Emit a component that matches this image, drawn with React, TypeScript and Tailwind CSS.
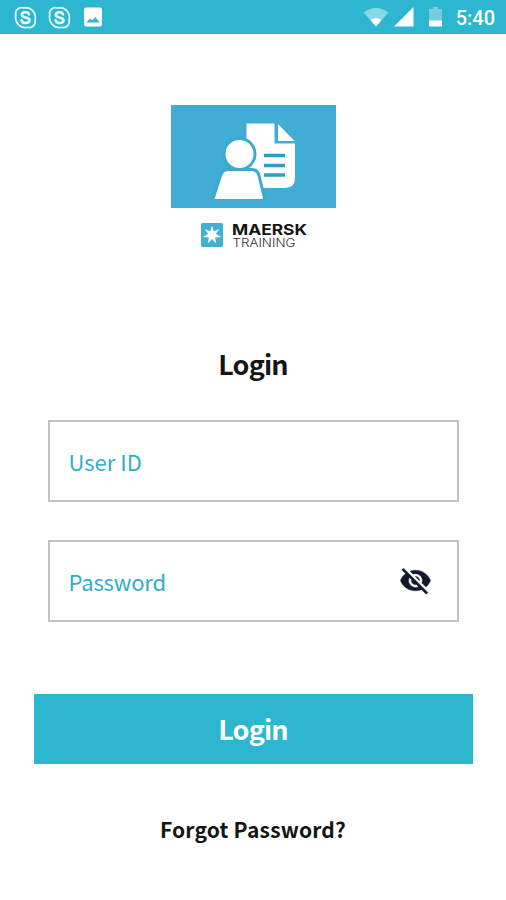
import React from "react";

function SkypeIcon() {
  return (
    <svg viewBox="2 2 20 20" className="h-[23px] w-[23px]" fill="none" stroke="#e6fbff" strokeLinecap="round" strokeLinejoin="round">
      <path strokeWidth="1.5" d="M12 3.400a8.700 8.700 0 0 1 8.300 11a5 5 0 0 1-6.300 6.100a8.700 8.700 0 0 1-10.400-10.600a5 5 0 0 1 6.300-6.200a8.700 8.700 0 0 1 2.100-.300z" />
      <path strokeWidth="2.300" d="M8.600 14.500c.500 1.800 2.100 2.300 3.500 2.300c2.300 0 3.400-1.100 3.400-2.400c0-1.600-1.700-2-3.500-2.400s-3.200-1-3.200-2.300c0-1.300 1.100-2.300 3.200-2.300c1.600 0 2.700.500 3.100 1.800" />
    </svg>
  );
}

function StatusBar() {
  return (
    <header className="flex h-[34px] items-center justify-between bg-[#2cb6d0] pl-[14px] pr-[11px] text-white">
      <div className="flex items-center gap-[11px]">
        <SkypeIcon />
        <SkypeIcon />
        <svg viewBox="0 0 20 20" className="ml-px h-5 w-5">
          <path fill="#fff" fillRule="evenodd" d="M3 .5h14a2 2 0 0 1 2 2v15a2 2 0 0 1-2 2H3a2 2 0 0 1-2-2v-15a2 2 0 0 1 2-2zM3.500 15.500h13l-4-5.500-3.200 3.500-2.300-2z" />
        </svg>
      </div>
      <div className="flex items-center">
        <svg viewBox="0 0 26 20" className="h-5 w-[26px]">
          <path fill="#88d7e5" d="M.5 5.500Q13-3.500 25.500 5.500L13 19.500z" />
          <path fill="#fff" d="M7.500 13Q13 9 18.500 13L13 19.500z" />
        </svg>
        <svg viewBox="0 0 20 20" className="ml-[5px] h-5 w-5">
          <path fill="#fff" d="M0 19.500 19.500 0v19.500z" />
        </svg>
        <svg viewBox="0 0 13 20" className="ml-[15px] h-5 w-[13px]">
          <path fill="#72cede" d="M0 2h4V0h5v2h4v12H0z" />
          <path fill="#fff" d="M0 13.500h13v5a1 1 0 0 1-1 1H1a1 1 0 0 1-1-1z" />
        </svg>
        <span className="ml-[14px] mt-[2px] font-['Roboto',sans-serif] text-[20px] font-medium leading-6">5:40</span>
      </div>
    </header>
  );
}

// Seven-pointed star, alternating outer and inner vertices.
const starPoints = Array.from({ length: 14 }, (_, i) => {
  const r = i % 2 === 0 ? 9.5 : 4;
  const a = (i * Math.PI) / 7 - Math.PI / 2;
  return `${11 + r * Math.cos(a)},${12 + r * Math.sin(a)}`;
}).join(" ");

function TrainingLogo() {
  return (
    <div className="flex flex-col items-center">
      <svg viewBox="0 0 165 103" className="ml-px h-[103px] w-[165px]">
        <path fill="#41acd5" d="M0 0h165v103H0z" />
        <path fill="#fff" d="M75.500 18.500h28v20h20.500v34q0 10.500-10.500 10.500H75.500z" />
        <path fill="#fff" d="m107 19 16.500 17H107z" />
        <path stroke="#299fc9" strokeWidth="3.500" d="M93 50.500h21M93 60.500h21M93 70h21" />
        <circle cx="68.500" cy="49" r="15.500" fill="#fff" stroke="#3ba9d2" strokeWidth="3" />
        <path fill="#fff" stroke="#3ba9d2" strokeWidth="3" d="M41.500 95.500 49.500 70.500q2-6 8-6h23q6 0 7.500 6l6 25z" />
        <path fill="#41acd5" d="M38 94h58v4H38z" />
      </svg>
      <div className="ml-[2px] mt-[15px] flex h-[26px] items-start gap-[9px]">
        <svg viewBox="0 0 22 24" className="h-6 w-[22px]">
          <rect width="22" height="24" rx="1.500" fill="#41b0d5" />
          <polygon fill="#fff" points={starPoints} />
        </svg>
        <svg viewBox="0 -4 76 30" className="-mt-[4px] h-[30px] w-[76px] overflow-visible">
          <text x="0" y="12" textLength="75" lengthAdjust="spacingAndGlyphs" fill="#141414" className="font-['Inter',sans-serif] text-[14.500px] font-bold">MAERSK</text>
          <text x=".5" y="24" textLength="63" lengthAdjust="spacingAndGlyphs" fill="#333" className="font-['Inter',sans-serif] text-[11.500px] font-light">TRAINING</text>
        </svg>
      </div>
    </div>
  );
}

function HiddenIcon() {
  return (
    <svg viewBox="0 0 24 24" className="-mt-px h-[33px] w-[33px]" fill="#101a2c" stroke="#101a2c" strokeWidth=".3">
      <path d="M12 7c2.760 0 5 2.240 5 5 0 .650-.130 1.260-.360 1.830l2.920 2.920c1.510-1.260 2.700-2.890 3.430-4.750-1.730-4.390-6-7.500-11-7.500-1.400 0-2.740.250-3.980.700l2.160 2.160C10.740 7.130 11.350 7 12 7zM2 4.270l2.280 2.280.460.460C3.080 8.300 1.780 10.020 1 12c1.730 4.390 6 7.500 11 7.500 1.550 0 3.030-.300 4.380-.840l.420.420L19.730 22 21 20.730 3.270 3 2 4.270zM7.530 9.800l1.550 1.550c-.050.210-.080.430-.080.650 0 1.660 1.340 3 3 3 .220 0 .440-.030.650-.080l1.550 1.550c-.670.330-1.410.530-2.200.530-2.760 0-5-2.240-5-5 0-.790.200-1.530.530-2.200zm4.310-.780 3.150 3.150.020-.160c0-1.660-1.340-3-3-3l-.170.010z" />
    </svg>
  );
}

function Field({ label, spacing, children }: { label: string; spacing?: string; children?: React.ReactNode }) {
  return (
    <div className="flex h-[82px] w-[411px] items-center justify-between border-2 border-[#c2c2c2] pl-[19px] pr-[25px] text-[22px] text-[#31adc8]">
      <span className={`-mt-px leading-8 ${spacing ?? ""}`}>{label}</span>
      {children}
    </div>
  );
}

export default function App() {
  return (
    <div className="h-[900px] w-[506px] bg-white font-['Noto_Sans_CJK_SC',sans-serif] text-[#151515]">
      <StatusBar />
      <main className="flex flex-col items-center pt-[71px]">
        <TrainingLogo />
        <h1 className="mt-[95px] text-[27px] font-bold leading-10 tracking-[-0.8px]">Login</h1>
        <div className="mt-[36px] flex flex-col gap-[38px]">
          <Field label="User ID" />
          <Field label="Password" spacing="tracking-[-0.15px]"><HiddenIcon /></Field>
        </div>
        <button className="mt-[72px] flex h-[70px] w-[439px] items-center justify-center bg-[#2cb6d0] text-[27px] font-bold tracking-[-0.8px] text-white">Login</button>
        <a className="mt-[49px] text-[21px] font-bold leading-8 tracking-[0.2px]">Forgot Password?</a>
      </main>
    </div>
  );
}
